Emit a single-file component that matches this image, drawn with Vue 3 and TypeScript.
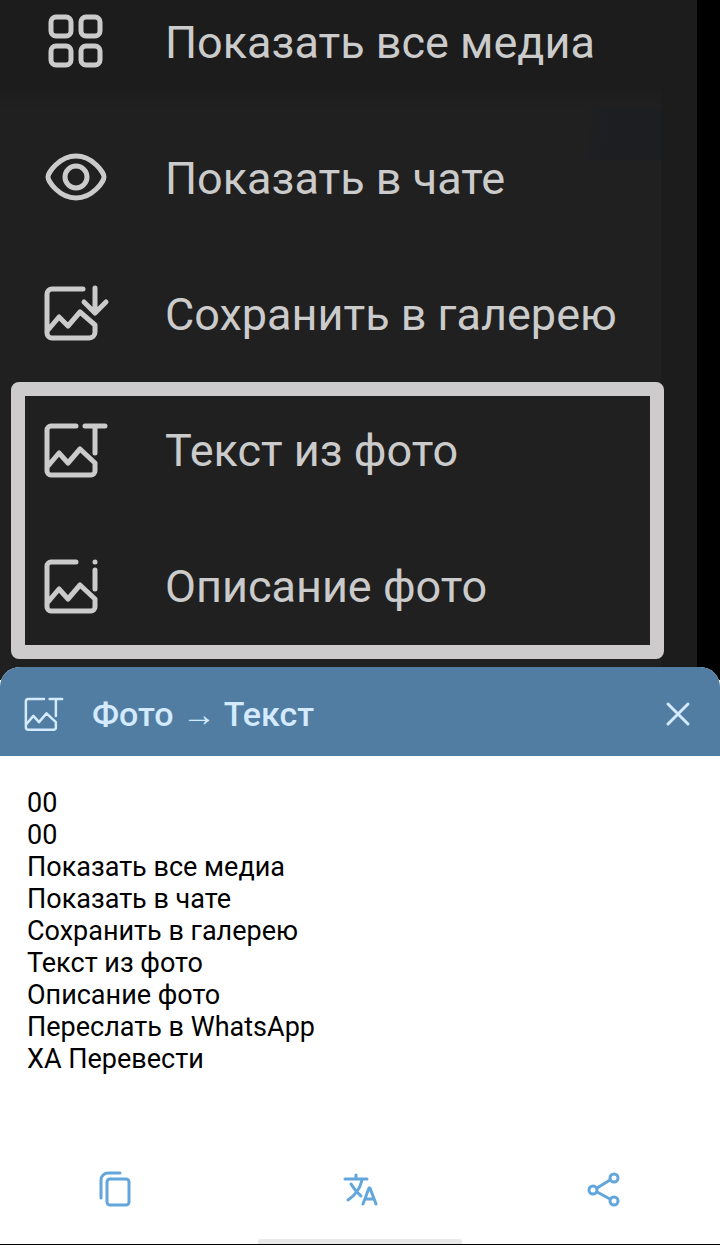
<script setup lang="ts">
import { ref } from 'vue'

type IconName = 'grid' | 'eye' | 'save' | 'text' | 'info'

interface MenuItem {
  icon: IconName
  label: string
}

const menuItems: MenuItem[] = [
  { icon: 'grid', label: 'Показать все медиа' },
  { icon: 'eye', label: 'Показать в чате' },
  { icon: 'save', label: 'Сохранить в галерею' },
]

const highlightedItems: MenuItem[] = [
  { icon: 'text', label: 'Текст из фото' },
  { icon: 'info', label: 'Описание фото' },
]

const iconPaths: Record<IconName, string> = {
  grid: 'M12 7h10a5 5 0 0 1 5 5v9a5 5 0 0 1-5 5h-10a5 5 0 0 1-5-5v-9a5 5 0 0 1 5-5z M42 7h9a5 5 0 0 1 5 5v9a5 5 0 0 1-5 5h-9a5 5 0 0 1-5-5v-9a5 5 0 0 1 5-5z M12 36h10a5 5 0 0 1 5 5v9a5 5 0 0 1-5 5h-10a5 5 0 0 1-5-5v-9a5 5 0 0 1 5-5z M42 36h9a5 5 0 0 1 5 5v9a5 5 0 0 1-5 5h-9a5 5 0 0 1-5-5v-9a5 5 0 0 1 5-5z',
  eye: 'M4 31C4 27 15 10 32 10S60 27 60 31S49 52 32 52S4 35 4 31z M43 31a11 11 0 1 1-22 0a11 11 0 0 1 22 0z',
  save: 'M39 7H8a5 5 0 0 0-5 5V51a5 5 0 0 0 5 5H45a6 6 0 0 0 6-6V43L36 30L24 44L15 35L4 48 M51 6V30 M40 20L51 31L62 20',
  text: 'M32 8H7a4 4 0 0 0-4 4V53a4 4 0 0 0 4 4H47a4 4 0 0 0 4-4V45L36 31L24 45L15 35L4 48 M41 8H61 M51 8V35',
  info: 'M32 8H7a4 4 0 0 0-4 4V53a4 4 0 0 0 4 4H47a4 4 0 0 0 4-4V45L36 31L24 45L15 35L4 48 M51 16V35 M51 8V8.1',
}

const recognizedLines: string[] = [
  '00',
  '00',
  'Показать все медиа',
  'Показать в чате',
  'Сохранить в галерею',
  'Текст из фото',
  'Описание фото',
  'Переслать в WhatsApp',
  'ХА Перевести',
]

const sheetOpen = ref(true)
</script>

<template>
  <div class="screen">
    <main class="photo">
      <nav class="menu" aria-label="Меню фото">
        <button v-for="item in menuItems" :key="item.label" type="button" class="menu-item">
          <svg class="menu-icon" viewBox="0 0 64 64" aria-hidden="true">
            <path :d="iconPaths[item.icon]" />
          </svg>
          <span>{{ item.label }}</span>
        </button>
        <div class="highlighted">
          <button v-for="item in highlightedItems" :key="item.label" type="button" class="menu-item">
            <svg class="menu-icon" viewBox="0 0 64 64" aria-hidden="true">
              <path :d="iconPaths[item.icon]" />
            </svg>
            <span>{{ item.label }}</span>
          </button>
        </div>
      </nav>
    </main>

    <section v-if="sheetOpen" class="sheet" aria-labelledby="sheet-title">
      <header class="sheet-header">
        <svg class="title-icon" viewBox="0 0 64 64" aria-hidden="true">
          <path :d="iconPaths.text" />
        </svg>
        <h1 id="sheet-title">Фото → Текст</h1>
        <button type="button" class="close" aria-label="Закрыть" @click="sheetOpen = false">
          <svg viewBox="0 0 26 26" aria-hidden="true"><path d="M3 3L23 23M23 3L3 23" /></svg>
        </button>
      </header>
      <div class="result">
        <p v-for="(line, index) in recognizedLines" :key="index">{{ line }}</p>
      </div>
      <footer class="actions">
        <button type="button" aria-label="Копировать">
          <svg viewBox="0 0 40 40" aria-hidden="true">
            <path d="M5 28V10a7 7 0 0 1 7-7H24" />
            <rect x="11" y="9" width="22" height="26" rx="3" />
          </svg>
        </button>
        <button type="button" aria-label="Перевести">
          <svg viewBox="0 0 40 40" aria-hidden="true">
            <path d="M5 9H27 M16 5V9 M11 14Q15 21 21 26 M22 10Q19 23 8 30 M23 34L29 18H30L36 34 M25 29H34" />
          </svg>
        </button>
        <button type="button" aria-label="Поделиться">
          <svg viewBox="0 0 40 40" aria-hidden="true">
            <path d="M13 18L26 10M13 22L26 29" />
            <circle cx="9" cy="20" r="4" />
            <circle cx="30" cy="8" r="4" />
            <circle cx="30" cy="31" r="4" />
          </svg>
        </button>
      </footer>
      <div class="home-bar"></div>
    </section>
  </div>
</template>

<style>
body {
  margin: 0;
  background: #fff;
}
</style>

<style scoped>
.screen {
  display: flex;
  flex-direction: column;
  min-height: 100vh;
  box-sizing: border-box;
  border-bottom: 1px solid #000;
  font-family: Roboto, "Noto Sans", sans-serif;
}

button {
  border: 0;
  padding: 0;
  background: none;
  font: inherit;
  color: inherit;
  cursor: pointer;
}

svg {
  display: block;
  fill: none;
  stroke: currentColor;
  stroke-linecap: round;
  stroke-linejoin: round;
}

.photo {
  padding-right: 23px;
  overflow: hidden;
  background: #000;
}

.menu {
  padding-bottom: 26px;
  margin-top: -26px;
  background:
    linear-gradient(#1c1c1c, #1c1c1c) right / 36px 100% no-repeat,
    linear-gradient(100deg, #1c1e2200, #1c1e22 30%) right 36px top 134px / 74px 52px no-repeat,
    linear-gradient(#1c1c1c 110px, #202020 136px);
  color: #cbcbcb;
}

.menu-item {
  display: flex;
  align-items: center;
  gap: 57px;
  width: 100%;
  height: 136px;
  padding-left: 44px;
  font-size: 45px;
  text-align: left;
  white-space: nowrap;
}

.menu-icon {
  flex: none;
  width: 64px;
  height: 64px;
  stroke-width: 5;
  overflow: visible;
}

.highlighted {
  position: relative;
}

.highlighted::before {
  content: "";
  position: absolute;
  inset: 0 33px -5px 11px;
  border: 14px solid #cdcbcc;
  border-radius: 8px;
  pointer-events: none;
}

.sheet {
  position: relative;
  display: flex;
  flex: 1;
  flex-direction: column;
  margin-top: -13px;
  border-radius: 20px 20px 0 0;
  background: #fff;
  overflow: hidden;
}

.sheet-header {
  display: flex;
  align-items: center;
  box-sizing: border-box;
  height: 89px;
  padding: 5px 29px 0 24px;
  background: #517da2;
  color: #d4eaff;
}

.title-icon {
  width: 40px;
  height: 40px;
  stroke-width: 4;
}

h1 {
  flex: 1;
  margin: 0 0 0 28px;
  font-size: 34px;
  font-weight: 500;
  line-height: 40px;
}

.close svg {
  width: 26px;
  height: 26px;
  stroke-width: 3;
}

.result {
  flex: 1;
  padding: 31px 27px;
  color: #000;
  font-size: 27px;
  line-height: 32px;
}

.result p {
  margin: 0;
}

.actions {
  display: flex;
  justify-content: space-between;
  padding: 0 96px 29px;
  color: #62a6dc;
}

.actions svg {
  width: 40px;
  height: 40px;
  stroke-width: 3;
}

.home-bar {
  width: 204px;
  height: 5px;
  margin: 0 auto;
  border-radius: 3px 3px 0 0;
  background: #e8e8e8;
}
</style>
